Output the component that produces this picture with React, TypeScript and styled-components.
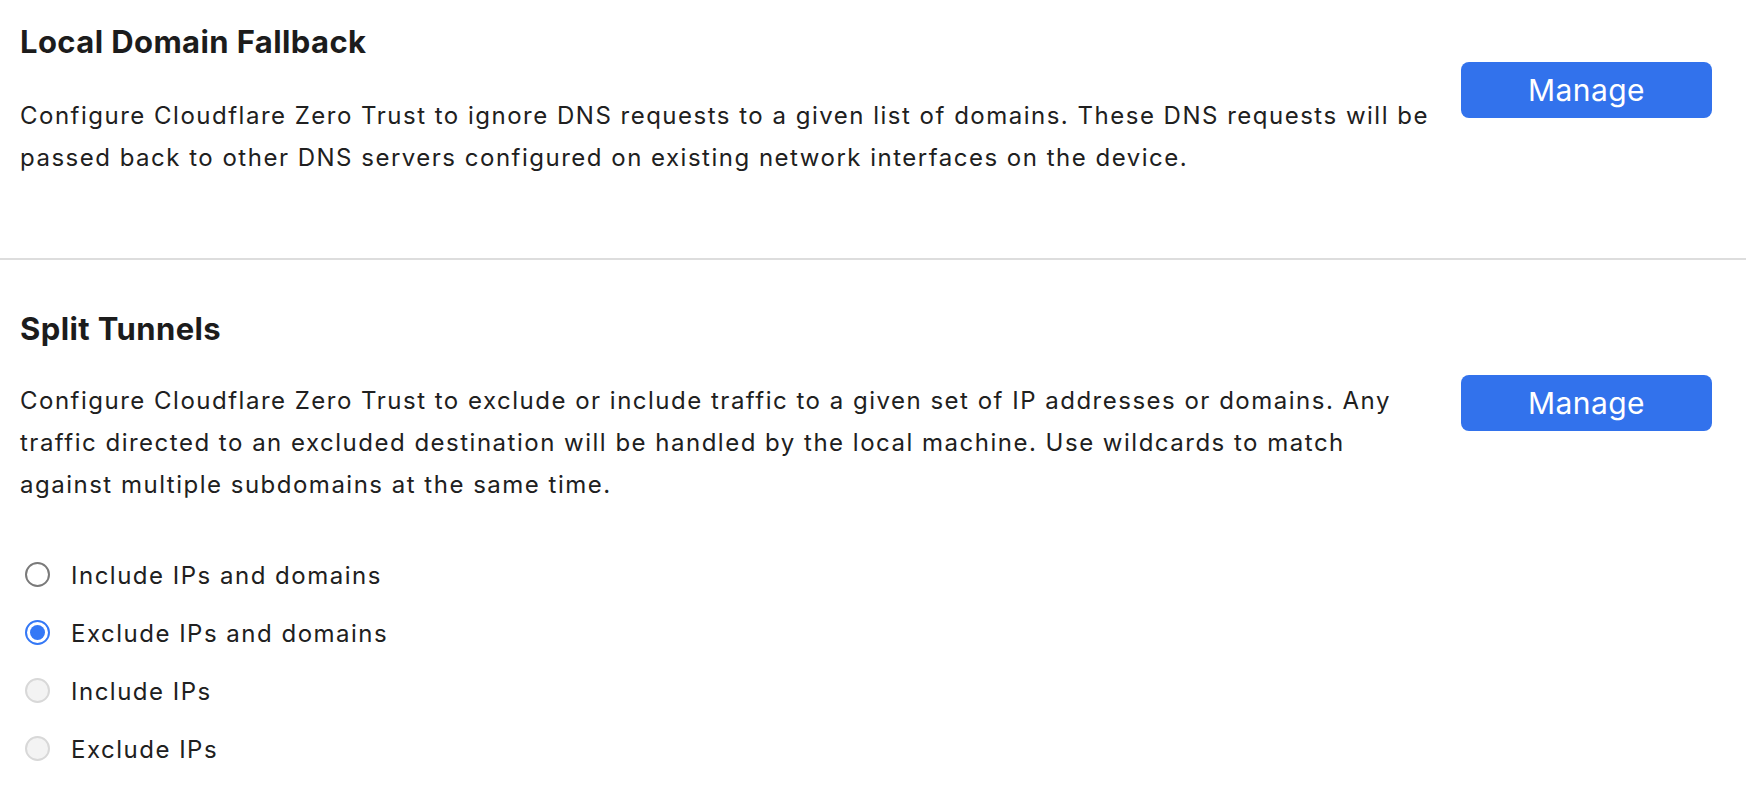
import React, { ReactElement, useState } from 'react';
import styled, { createGlobalStyle, css } from 'styled-components';

const GlobalStyle = createGlobalStyle`
  html, body {
    margin: 0;
    padding: 0;
    background: #ffffff;
  }

  body {
    font-family: Inter, 'Noto Sans', 'Liberation Sans', sans-serif;
    color: #1f1f1f;
    -webkit-font-smoothing: antialiased;
  }
`;

const Page = styled.div`
  display: flex;
  flex-direction: column;

  width: 100%;
  min-height: 100vh;

  box-sizing: border-box;
`;

const Section = styled.section<{ $top: number; $bottom: number }>`
  display: grid;
  grid-template-columns: 1fr 251px;
  column-gap: 21px;
  align-items: start;

  padding: ${(p) => p.$top}px 34px ${(p) => p.$bottom}px 20px;
`;

const Body = styled.div`
  display: flex;
  flex-direction: column;
`;

const Title = styled.h2<{ $gap: number }>`
  margin: 0 0 ${(p) => p.$gap}px;

  font-size: 31px;
  line-height: 36px;
  font-weight: 700;
  letter-spacing: 0.4px;
  color: #1c1c1c;
`;

const Description = styled.p`
  margin: 0;

  font-size: 24px;
  line-height: 42px;
  font-weight: 400;
  letter-spacing: 1.5px;
  color: #202020;
`;

const ManageButton = styled.button<{ $offset: number }>`
  margin-top: ${(p) => p.$offset}px;
  height: 56px;
  width: 100%;

  border: none;
  border-radius: 8px;
  background: #3272ec;
  color: #ffffff;

  font-family: inherit;
  font-size: 30px;
  font-weight: 400;
  letter-spacing: 0.4px;
  cursor: pointer;
`;

const Divider = styled.hr`
  margin: 0;
  height: 2px;

  border: none;
  background: #dddddd;
`;

const RadioList = styled.div`
  display: flex;
  flex-direction: column;

  margin-top: 40px;
`;

const RadioRow = styled.label<{ $disabled?: boolean }>`
  display: flex;
  align-items: center;
  gap: 21px;

  height: 58px;
  padding-left: 5px;

  font-size: 24px;
  letter-spacing: 1.5px;
  color: #202020;
  cursor: ${(p) => (p.$disabled ? 'default' : 'pointer')};
`;

const RadioDot = styled.span<{ $checked?: boolean; $disabled?: boolean }>`
  position: relative;
  flex: none;

  width: 25px;
  height: 25px;
  margin-top: -2px;

  border-radius: 50%;
  box-sizing: border-box;
  border: 2px solid #7a7a7a;
  background: #ffffff;

  ${(p) =>
    p.$disabled &&
    css`
      border-color: #d8d8d8;
      background: #f3f3f3;
    `}

  ${(p) =>
    p.$checked &&
    css`
      border-color: #3478f6;

      &::after {
        content: '';
        position: absolute;
        inset: 3px;
        border-radius: 50%;
        background: #3478f6;
      }
    `}
`;

const options = [
  { id: 'include-all', label: 'Include IPs and domains', disabled: false },
  { id: 'exclude-all', label: 'Exclude IPs and domains', disabled: false },
  { id: 'include-ips', label: 'Include IPs', disabled: true },
  { id: 'exclude-ips', label: 'Exclude IPs', disabled: true },
];

const App = (): ReactElement => {
  const [mode, setMode] = useState('exclude-all');

  return (
    <>
      <GlobalStyle />
      <Page>
        <Section $top={24} $bottom={79}>
          <Body>
            <Title $gap={35}>Local Domain Fallback</Title>
            <Description>
              Configure Cloudflare Zero Trust to ignore DNS requests to a given list of domains. These DNS requests
              will be passed back to other DNS servers configured on existing network interfaces on the device.
            </Description>
          </Body>
          <ManageButton $offset={38}>Manage</ManageButton>
        </Section>

        <Divider />

        <Section $top={51} $bottom={8}>
          <Body>
            <Title $gap={33}>Split Tunnels</Title>
            <Description>
              Configure Cloudflare Zero Trust to exclude or include traffic to a given set of IP addresses or
              domains. Any traffic directed to an excluded destination will be handled by the local machine. Use
              wildcards to match against multiple subdomains at the same time.
            </Description>
            <RadioList>
              {options.map((o) => (
                <RadioRow key={o.id} $disabled={o.disabled} onClick={() => !o.disabled && setMode(o.id)}>
                  <RadioDot $checked={mode === o.id} $disabled={o.disabled} />
                  {o.label}
                </RadioRow>
              ))}
            </RadioList>
          </Body>
          <ManageButton $offset={64}>Manage</ManageButton>
        </Section>
      </Page>
    </>
  );
};

export default App;
